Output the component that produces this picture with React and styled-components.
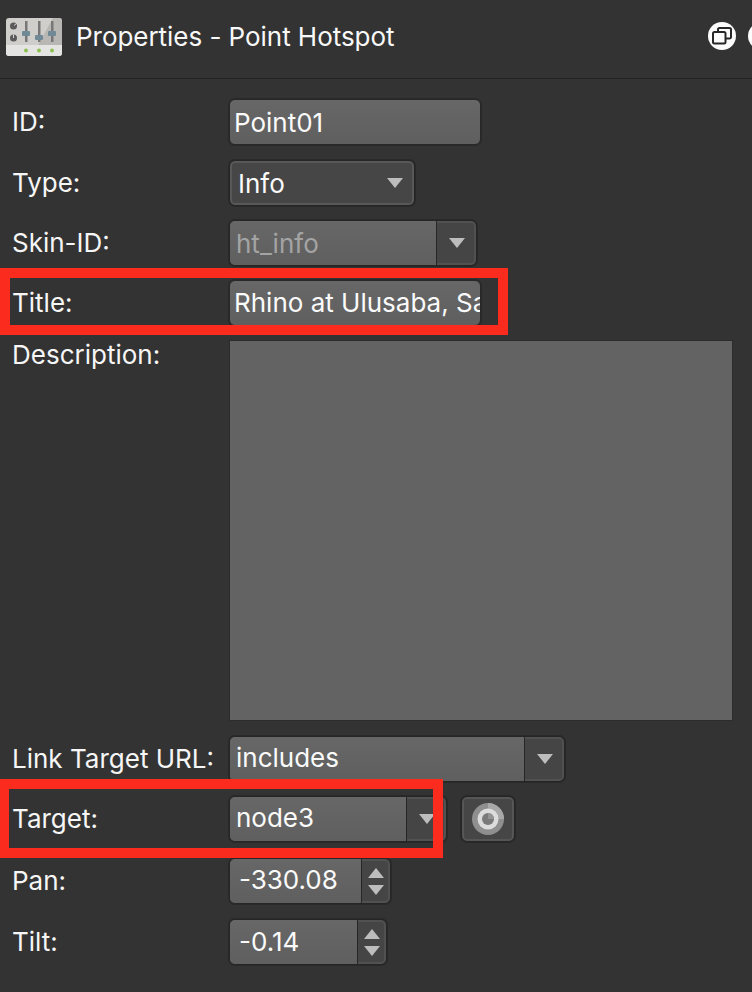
import React from "react";
import styled, { createGlobalStyle } from "styled-components";

const Global = createGlobalStyle`
  html, body { margin: 0; padding: 0; background: #333333; }
  #root { width: 752px; height: 992px; }
`;

const Page = styled.div`
  position: relative;
  width: 752px;
  height: 992px;
  overflow: hidden;
  background: #333333;
  color: #f4f4f4;
  font-family: Inter, "Liberation Sans", sans-serif;
  font-size: 26px;
`;

const Header = styled.header`
  display: flex;
  align-items: center;
  height: 79px;
  box-sizing: border-box;
  padding: 0 0 5px 6px;
  border-bottom: 1px solid #232323;
`;

const Title = styled.h1`
  flex: 1;
  margin: 0 0 0 14px;
  font-size: 26px;
  font-weight: 400;
  letter-spacing: -0.04px;
  color: #f8f8f8;
`;

const WindowButtons = styled.div`
  display: flex;
  gap: 12px;
  margin-right: -24px;
  transform: translateY(-1px);
`;

const WindowButton = styled.div`
  display: flex;
  align-items: center;
  justify-content: center;
  width: 28px;
  height: 28px;
  border-radius: 50%;
  background: #fbfbfb;
`;

const Form = styled.form`
  display: flex;
  flex-direction: column;
  gap: 14px;
  padding: 20px 0 0 12px;
`;

const Row = styled.div`
  display: grid;
  grid-template-columns: 217px 1fr;
  align-items: ${(p) => (p.$top ? "start" : "center")};
  margin-top: ${(p) => p.$shift || 0}px;
`;

const Label = styled.label`
  font-size: 26px;
  line-height: 46px;
  color: #f6f6f6;
  white-space: nowrap;
  ${(p) => p.$top && "line-height: 30px;"}
`;

const Controls = styled.div`
  display: flex;
  align-items: center;
  gap: 14px;
`;

const Field = styled.div`
  display: flex;
  align-items: center;
  box-sizing: border-box;
  width: ${(p) => p.$w}px;
  height: 46px;
  padding: 0 0 ${(p) => p.$lift || 0}px 4px;
  background: linear-gradient(#676767, #5f5f5f);
  border: 1px solid #282828;
  border-radius: 6px;
  box-shadow: 0 0 0 1px rgba(32, 32, 32, 0.55);
  overflow: hidden;
  white-space: nowrap;
  color: #fafafa;
`;

const Clip = styled.span`
  flex: 1;
  min-width: 0;
  overflow: hidden;
`;

const TextArea = styled.div`
  box-sizing: border-box;
  width: 504px;
  height: 381px;
  background: #636363;
  border: 1px solid #2c2c2c;
`;

const Select = styled.div`
  display: flex;
  align-items: center;
  justify-content: space-between;
  box-sizing: border-box;
  width: ${(p) => p.$w}px;
  height: 46px;
  padding: 0 11px 0 8px;
  background: #464646;
  border: 1px solid #262626;
  border-radius: 6px;
  box-shadow: inset 0 0 0 2px #585858, 0 0 0 1px rgba(32, 32, 32, 0.55);
  color: #fafafa;
`;

const Combo = styled.div`
  display: flex;
  box-sizing: border-box;
  width: ${(p) => p.$w}px;
  height: 46px;
  background: #454545;
  border: 1px solid #262626;
  border-radius: 6px;
  box-shadow: inset 0 0 0 2px #515151, 0 0 0 1px rgba(32, 32, 32, 0.55);
  overflow: hidden;
`;

const ComboValue = styled.div`
  flex: 1;
  display: flex;
  align-items: center;
  padding: 0 0 ${(p) => p.$lift || 0}px ${(p) => p.$pad ?? 6}px;
  background: linear-gradient(#676767, #5f5f5f);
  border-right: 1px solid #262626;
  white-space: nowrap;
  color: ${(p) => (p.$muted ? "#a4a4a4" : "#fafafa")};
`;

const ComboArrow = styled.div`
  display: flex;
  flex-direction: column;
  align-items: center;
  justify-content: center;
  gap: 7px;
  width: ${(p) => p.$w || 39}px;
  flex: none;
`;

const IconButton = styled.div`
  display: flex;
  align-items: center;
  justify-content: center;
  box-sizing: border-box;
  width: 54px;
  height: 46px;
  background: #464646;
  border: 1px solid #262626;
  border-radius: 6px;
  box-shadow: inset 0 0 0 2px #565656, 0 0 0 1px rgba(32, 32, 32, 0.55);
`;

const RedBox = styled.div`
  position: absolute;
  box-sizing: border-box;
  left: ${(p) => p.$l}px;
  top: ${(p) => p.$t}px;
  width: ${(p) => p.$w}px;
  height: ${(p) => p.$h}px;
  border: 10px solid #fb2c1e;
  pointer-events: none;
`;

const Down = () => (
  <svg width="16" height="10" viewBox="0 0 16 10" style={{ display: "block" }}>
    <path d="M0 0H16L8 10Z" fill="#bdbdbd" />
  </svg>
);

const Up = () => (
  <svg width="16" height="10" viewBox="0 0 16 10" style={{ display: "block" }}>
    <path d="M0 10H16L8 0Z" fill="#bdbdbd" />
  </svg>
);

const RestoreIcon = () => (
  <svg width="20" height="20" viewBox="0 0 20 20" fill="none" stroke="#262626" strokeWidth="2">
    <rect x="1" y="6" width="12.5" height="11.5" rx="1.5" />
    <path d="M6 6V3.5A1.5 1.5 0 0 1 7.5 2H17.5A1.5 1.5 0 0 1 19 3.5V11A1.5 1.5 0 0 1 17.5 12.5H13.5" />
  </svg>
);

const MixerIcon = () => (
  <svg width="56" height="38" viewBox="0 0 56 38" style={{ flex: "none" }}>
    <rect x="0" y="0" width="56" height="38" rx="3" fill="#cfcecb" />
    <path d="M47 0H53A3 3 0 0 1 56 3V27H32Z" fill="#b9b7b4" />
    <path d="M0 27H56V35A3 3 0 0 1 53 38H3A3 3 0 0 1 0 35Z" fill="#e4e4e2" />
    <circle cx="7.5" cy="8" r="3.5" fill="#5a5a5a" />
    <circle cx="7.5" cy="20" r="3.5" fill="#5a5a5a" />
    <path d="M7.5 16.5V20" stroke="#d6d5d2" strokeWidth="1" />
    <path d="M8 7.5L10.5 5.5" stroke="#d6d5d2" strokeWidth="1" />
    <rect x="19" y="3" width="2.5" height="21" fill="#777" />
    <rect x="32" y="3" width="2.5" height="21" fill="#777" />
    <rect x="45" y="3" width="2.5" height="21" fill="#777" />
    <rect x="16" y="13" width="8" height="5" rx="1" fill="#6f8a96" />
    <rect x="29" y="17" width="8" height="5" rx="1" fill="#6f8a96" />
    <rect x="42" y="13" width="8" height="5" rx="1" fill="#6f8a96" />
    <circle cx="20" cy="32.5" r="2" fill="#8cc152" />
    <circle cx="33" cy="32.5" r="2" fill="#8cc152" />
    <circle cx="46" cy="32.5" r="2" fill="#8cc152" />
  </svg>
);

const TargetIcon = () => (
  <svg width="32" height="32" viewBox="0 0 32 32">
    <circle cx="16" cy="16" r="16" fill="#8f8f8f" />
    <path d="M16 0A16 16 0 0 1 32 16H16Z" fill="#a8a8a8" />
    <circle cx="16" cy="16" r="10.5" fill="#dcdcdc" />
    <circle cx="16" cy="16" r="6" fill="#7a7a7a" />
    <path d="M16 10A6 6 0 0 1 22 16H16Z" fill="#949494" />
  </svg>
);

const Spinner = () => (
  <ComboArrow $w={28}>
    <Up />
    <Down />
  </ComboArrow>
);

export default function App() {
  return (
    <Page>
      <Global />
      <Header>
        <MixerIcon />
        <Title>Properties - Point Hotspot</Title>
        <WindowButtons>
          <WindowButton>
            <RestoreIcon />
          </WindowButton>
          <WindowButton />
        </WindowButtons>
      </Header>
      <Form>
        <Row>
          <Label>ID:</Label>
          <Field $w={252}>Point01</Field>
        </Row>
        <Row $shift={1}>
          <Label>Type:</Label>
          <Select $w={186}>
            Info
            <Down />
          </Select>
        </Row>
        <Row>
          <Label>Skin-ID:</Label>
          <Combo $w={248}>
            <ComboValue $muted>ht_info</ComboValue>
            <ComboArrow>
              <Down />
            </ComboArrow>
          </Combo>
        </Row>
        <Row>
          <Label>Title:</Label>
          <Field $w={252} $lift={2}>
            <Clip>Rhino at Ulusaba, Sa</Clip>
          </Field>
        </Row>
        <Row $top>
          <Label $top>Description:</Label>
          <TextArea />
        </Row>
        <Row $shift={1}>
          <Label>Link Target URL:</Label>
          <Combo $w={336}>
            <ComboValue $lift={3}>includes</ComboValue>
            <ComboArrow>
              <Down />
            </ComboArrow>
          </Combo>
        </Row>
        <Row>
          <Label>Target:</Label>
          <Controls>
            <Combo $w={218}>
              <ComboValue $lift={3}>node3</ComboValue>
              <ComboArrow>
                <Down />
              </ComboArrow>
            </Combo>
            <IconButton>
              <TargetIcon />
            </IconButton>
          </Controls>
        </Row>
        <Row $shift={2}>
          <Label>Pan:</Label>
          <Combo $w={162}>
            <ComboValue $pad={9} $lift={3}>-330.08</ComboValue>
            <Spinner />
          </Combo>
        </Row>
        <Row $shift={1}>
          <Label>Tilt:</Label>
          <Combo $w={158}>
            <ComboValue $pad={9} $lift={2}>-0.14</ComboValue>
            <Spinner />
          </Combo>
        </Row>
      </Form>
      <RedBox $l={0} $t={268} $w={508} $h={67} />
      <RedBox $l={-1} $t={779} $w={444} $h={79} />
    </Page>
  );
}
